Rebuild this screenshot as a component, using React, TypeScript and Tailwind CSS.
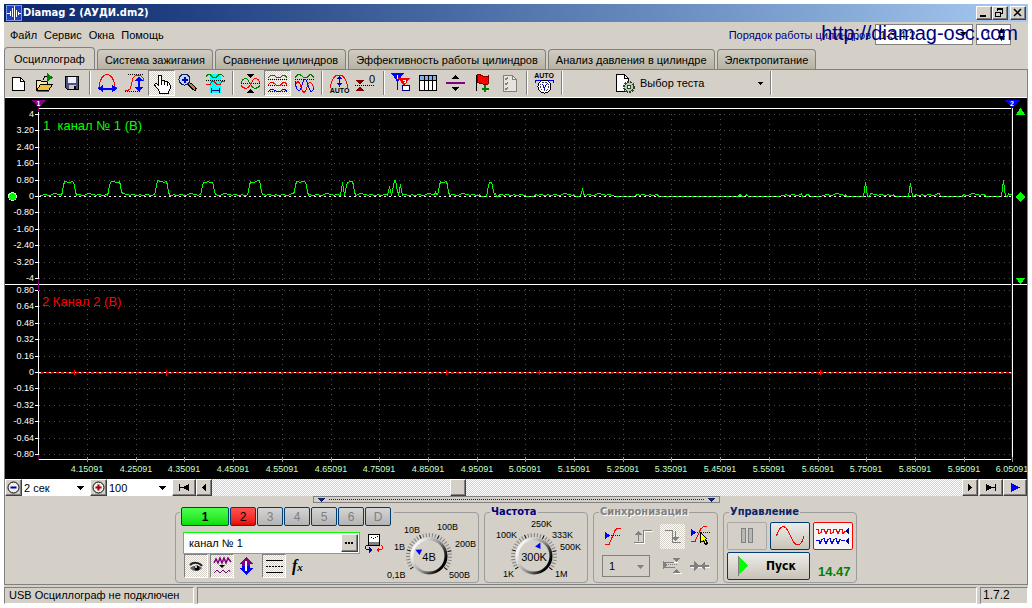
import { useState } from "react";
import type { ReactNode } from "react";
import clsx from "clsx";

const TABS = [
  "Осциллограф",
  "Система зажигания",
  "Сравнение цилиндров",
  "Эффективность работы цилиндров",
  "Анализ давления в цилиндре",
  "Электропитание",
];

const MENU = ["Файл", "Сервис", "Окна", "Помощь"];

const BOLD = "font-['DejaVu_Sans_Condensed','DejaVu_Sans',sans-serif] font-bold text-[11px]";
const CHECKER =
  "bg-[conic-gradient(#fff_25%,#d4d0c8_0_50%,#fff_0_75%,#d4d0c8_0)] bg-[length:2px_2px]";
const RAISED =
  "bg-[#d4d0c8] border border-t-white border-l-white border-r-[#404040] border-b-[#404040] shadow-[inset_-1px_-1px_0_#808080]";
const PRESSED = "border border-t-[#808080] border-l-[#808080] border-r-white border-b-white";

// ---------- icons ----------

function Icon({ children, size = 25 }: { children: ReactNode; size?: number }) {
  return (
    <svg width={size} height={size} viewBox={`0 0 ${size} ${size}`} fill="none" shapeRendering="crispEdges" aria-hidden="true">
      {children}
    </svg>
  );
}

const NewIcon = () => (
  <Icon>
    <path d="M6.500 6.500h8l4 4v9h-12z" fill="#fff" stroke="#000" />
    <path d="M14.500 6.500v4h4" stroke="#000" />
  </Icon>
);

const OpenIcon = () => (
  <Icon>
    <path d="M3.500 18.500v-9h4l1 1h6v3" fill="#ffe9a0" stroke="#000" />
    <path d="M3.500 19.500l4-6h12l-4 6z" fill="#f0c040" stroke="#000" />
    <path d="M4 20.500h12" stroke="#806000" />
    <path d="M10.500 9c0-3 2-4 4-4" stroke="#000" />
    <path d="M14 2l6 4.500-6 4.500z" fill="#008000" />
  </Icon>
);

const SaveIcon = () => (
  <Icon>
    <path d="M5.500 5.500h13v13h-11l-2-2z" fill="#505078" stroke="#000" />
    <path d="M8 6h8v6H8z" fill="#eef" />
    <path d="M9 14h7v4H9z" fill="#c8c8d0" />
    <path d="M14 15h2v3h-2z" fill="#000" />
  </Icon>
);

const WidthIcon = () => (
  <Icon>
    <path d="M3 16.500h1c1-8 4-13 8-13s7 5 8 13h2" stroke="#f00" />
    <path d="M5 17.500h15" stroke="#00f" strokeWidth="2" />
    <path d="M3 17.500l5-4v8zM22 17.500l-5-4v8z" fill="#00f" />
  </Icon>
);

const HeightIcon = () => (
  <Icon>
    <path d="M6 3.500h16M3 20.500h16" stroke="#000" strokeDasharray="1 1" />
    <path d="M3 20c5 0 6-3 7-9s3-7 6-7 5 2 6 6" stroke="#f00" />
    <path d="M17 9v8" stroke="#00f" strokeWidth="2" />
    <path d="M17 5l-4 5h8zM17 21l-4-5h8z" fill="#00f" />
  </Icon>
);

const HandIcon = () => (
  <Icon>
    <path
      d="M9.500 14.500V5.500c0-2 3-2 3 0v5c0-2 3-2 3 0v1c0-2 3-1.500 3 .5v1c0-1.500 2.500-1.500 2.500.5v4c0 3-2 3-2 5h-8c0-3-2-4-5-8-1-2 1-3 3.500 0z"
      fill="#fff"
      stroke="#000"
    />
    <path d="M12.500 10v4M15.500 11v3M18.500 12v3" stroke="#000" />
  </Icon>
);

const ZoomIcon = () => (
  <Icon>
    <path d="M12 12l8 7" stroke="#000" strokeWidth="4" />
    <path d="M13 12.500l6 5.500" stroke="#c08040" strokeWidth="2" />
    <circle cx="8.500" cy="8.500" r="5.500" fill="#b8d8ff" stroke="#202050" />
    <path d="M8.500 5.500v6M5.500 8.500h6" stroke="#0000c0" strokeWidth="2" />
  </Icon>
);

const RangeIcon = () => (
  <Icon>
    <path d="M7 3h11v19H7z" fill="#0ff" />
    <path d="M3 9.500h20" stroke="#000" strokeDasharray="1 1" />
    <path d="M3 5.500l2-2h2l3 3h3l3-3h2l3 2" stroke="#008000" />
    <path d="M3 13.500h4l2-3h2l3 3h3l2-3h3" stroke="#f00" />
    <path d="M8.500 17v5M16.500 17v5M8 19.500h9" stroke="#000080" />
  </Icon>
);

const BalanceIcon = () => (
  <Icon>
    <path d="M3 12.500h19" stroke="#000" strokeDasharray="1 1" />
    <path d="M3 11.500c3-6 6-5 9 1s7 6 10 2" stroke="#008000" />
    <path d="M3 14.500c3 4 7 4 10-2s6-7 9-1" stroke="#f00" />
    <path d="M9 3h7l-3.500 4zM9 22h7l-3.500-4z" fill="#000" />
  </Icon>
);

const ThreeWavesIcon = () => (
  <Icon>
    <path d="M3 8.500h19M3 14.500h19M3 20.500h19" stroke="#000" strokeDasharray="1 1" />
    <path d="M3 6.500l3-2h3l3 2h3l3-2h2l2 2" stroke="#008000" />
    <path d="M3 13.500l3-2h2l4 3h3l3-3h2l2 2" stroke="#f00" />
    <path d="M3 20.500l3-2h2l4 2h3l3-2h2l2 2" stroke="#00f" />
  </Icon>
);

const OverlapIcon = () => (
  <Icon>
    <path d="M3 8.500h19" stroke="#000" strokeDasharray="1 1" />
    <path d="M3 6.500l3-3h2l4 3h3l3-3h1l3 3" stroke="#008000" />
    <path d="M3 16c2-7 4-7 6 0s4 7 6 0 4-6 7 1" stroke="#f00" />
    <path d="M3 10c2 12 5 12 7 4s4-8 6 0 4 8 6 3" stroke="#00f" />
  </Icon>
);

const AutoHeightIcon = () => (
  <Icon>
    <path d="M3 17c2-9 4-13 9-13s7 4 9 13" stroke="#f00" />
    <path d="M12.500 5v11" stroke="#000080" />
    <path d="M10 8l2.500-3L15 8zM10 12l2.500 3 2.500-3z" fill="#0000c0" />
    <text x="12.500" y="22" fontSize="7" fontWeight="700" textAnchor="middle" fill="#000">AUTO</text>
  </Icon>
);

const ZeroIcon = () => (
  <Icon>
    <path d="M1 14.500h19" stroke="#000" strokeDasharray="1 1" />
    <path d="M2 9h8l-4 5zM2 20h8l-4-5z" fill="#800000" />
    <text x="15" y="12" fontSize="11" fill="#000">0</text>
  </Icon>
);

const MarkersIcon = () => (
  <Icon>
    <path d="M2 2h13l-6.500 9z" fill="#00f" />
    <path d="M8.500 10v9" stroke="#00f" />
    <path d="M9 7h12l-6 8z" fill="#f00" />
    <path d="M13.500 15v5" stroke="#f00" />
    <path d="M8.500 4v4M14 9.500h2.500v1.500h-2" stroke="#fff" />
    <path d="M13.500 14.500h7v5h-7z" fill="#fff" stroke="#000080" />
  </Icon>
);

const TableIcon = () => (
  <Icon>
    <path d="M3.500 4.500h17v15h-17z" fill="#fff" stroke="#000" />
    <path d="M4 5h16v4H4z" fill="#80b0f0" />
    <path d="M4 9.500h16M8.500 5v14M12.500 5v14M16.500 5v14" stroke="#000" />
  </Icon>
);

const SplitIcon = () => (
  <Icon>
    <path d="M3 12h19" stroke="#800080" strokeWidth="2" />
    <path d="M9 8l3.500-4L16 8zM9 16l3.500 4 3.500-4z" fill="#000" />
  </Icon>
);

const FlagIcon = () => (
  <Icon>
    <path d="M6.500 4v16" stroke="#000" />
    <path d="M7 4c4-2 5 3 11 1v8c-5 2-7-2-11-1z" fill="#f00" stroke="#800000" />
    <path d="M15 14v7M11.500 17.500h7" stroke="#008000" strokeWidth="2" />
  </Icon>
);

const ChecklistIcon = () => (
  <Icon>
    <path d="M6.500 4.500h9l4 4v12h-13z" fill="#e6e3dc" stroke="#808080" />
    <path d="M15.500 4.500v4h4" stroke="#808080" />
    <path d="M8 7l1 2 2-3M8 12l1 2 2-3M8 17l1 2 2-3" stroke="#808080" />
  </Icon>
);

const AutoVoltIcon = () => (
  <Icon>
    <text x="12" y="7" fontSize="7" fontWeight="700" textAnchor="middle" fill="#000">AUTO</text>
    <path d="M3.500 12V9.500H9M21.500 12V9.500H16" stroke="#00f" />
    <circle cx="12.500" cy="15.500" r="6.500" fill="#fff" stroke="#000" />
    <circle cx="12.500" cy="15.500" r="4.500" stroke="#404040" strokeDasharray="2 1" />
    <path d="M10.500 13l2 4.500 2-4.500" stroke="#00f" />
  </Icon>
);

const TestIcon = () => (
  <Icon>
    <path d="M5.500 3.500h8l4 4v13h-12z" fill="#fff" stroke="#000" />
    <path d="M13.500 3.500v4h4" stroke="#000" />
    <circle cx="18" cy="16" r="5" fill="#b8ccb0" stroke="#304030" strokeWidth="2" strokeDasharray="2 1" />
    <circle cx="18" cy="16" r="2" fill="#fff" stroke="#304030" />
  </Icon>
);

type Tool = { label: string; icon: ReactNode; pressed?: boolean };

const TOOL_GROUPS: Tool[][] = [
  [
    { label: "Создать", icon: <NewIcon /> },
    { label: "Открыть", icon: <OpenIcon /> },
    { label: "Сохранить", icon: <SaveIcon /> },
  ],
  [
    { label: "Масштаб по ширине", icon: <WidthIcon /> },
    { label: "Масштаб по высоте", icon: <HeightIcon /> },
    { label: "Рука", icon: <HandIcon />, pressed: true },
    { label: "Лупа", icon: <ZoomIcon /> },
    { label: "Выделение", icon: <RangeIcon /> },
  ],
  [
    { label: "Совместить", icon: <BalanceIcon /> },
    { label: "Раздельно", icon: <ThreeWavesIcon />, pressed: true },
    { label: "Наложение", icon: <OverlapIcon /> },
  ],
  [
    { label: "Автомасштаб", icon: <AutoHeightIcon /> },
    { label: "Ноль", icon: <ZeroIcon /> },
  ],
  [
    { label: "Маркеры", icon: <MarkersIcon /> },
    { label: "Таблица", icon: <TableIcon /> },
    { label: "Разделитель", icon: <SplitIcon /> },
    { label: "Добавить флаг", icon: <FlagIcon /> },
    { label: "Список", icon: <ChecklistIcon /> },
  ],
  [{ label: "Авто", icon: <AutoVoltIcon /> }],
];

function Separator() {
  return (
    <div className="flex w-2 justify-center py-px">
      <div className="w-0.5 border-l border-l-[#808080] border-r border-r-white" />
    </div>
  );
}

// ---------- chart ----------

const AXIS_X = 33;
const RIGHT_X = 1007;
const CH1 = ["4", "3.20", "2.40", "1.60", "0.80", "0", "-0.80", "-1.60", "-2.40", "-3.20", "-4"];
const CH2 = ["0.80", "0.64", "0.48", "0.32", "0.16", "0", "-0.16", "-0.32", "-0.48", "-0.64", "-0.80"];
const TIMES = Array.from({ length: 20 }, (_, i) => (4.15091 + i * 0.1).toFixed(5));

const rowY = (top: number, i: number) => Math.round(top + i * 16.4);
const colX = (i: number) => Math.round(82 + i * 48.7);

const PULSES = [
  [57, 70], [103, 116], [150, 163], [196, 209], [243, 256], [289, 302], [340, 349], [387, 392], [433, 443], [482, 488],
];
// narrow spikes: x, height
const SPIKES = [
  [337, 14], [384, 10], [395, 12], [430, 4], [577, 7], [860, 14], [905, 13], [998, 16],
];
// stretches where the trace rests exactly on zero
const FLAT = [
  [475, 481], [491, 493], [521, 529], [569, 580], [609, 630], [653, 733], [736, 740], [743, 775], [797, 800], [804, 816], [841, 864], [889, 909], [935, 957], [980, 1002],
];

function tracePoints() {
  const noise = [1, 1, 2, 2, 1, 1, 2, 3, 3, 2, 2, 1, 2, 2, 1, 1, 2];
  const points: string[] = [];
  for (let x = AXIS_X + 1; x < RIGHT_X; x++) {
    const k = noise[Math.floor(x / 2) % noise.length];
    const pulse = PULSES.find(([a, b]) => x >= a && x <= b);
    const spike = SPIKES.find(([sx]) => Math.abs(sx - x) <= 2);
    let h = FLAT.some(([a, b]) => x >= a && x <= b) ? 0 : k;
    if (pulse) {
      const edge = Math.min(x - pulse[0], pulse[1] - x);
      h = edge === 0 ? 5 : edge === 1 ? 11 : 13 + k;
    } else if (spike) {
      const d = Math.abs(spike[0] - x);
      h = Math.max(h, d === 0 ? spike[1] : d === 1 ? Math.round(spike[1] / 2) : 0);
    }
    points.push(`${x + 0.5},${98.5 - h}`);
  }
  return points.join(" ");
}

function Chart() {
  return (
    <svg viewBox="0 0 1022 381" className="block h-auto w-full bg-black" shapeRendering="crispEdges" role="img" aria-label="Осциллограмма">
      {[16, 192].map((top) =>
        CH1.map((_, i) => (
          <path key={`${top}-${i}`} d={`M${AXIS_X + 1} ${rowY(top, i) + 0.5}H${RIGHT_X}`} stroke="#505050" strokeDasharray="1 4" />
        ))
      )}
      {TIMES.slice(0, -1).map((t, i) => (
        <path key={t} d={`M${colX(i) + 0.5} 16V361`} stroke="#505050" strokeDasharray="1 4" />
      ))}
      <path d="M33.500 10v351M33 10.500h974.500M0 186.500h1022M33 361.500h975M1007.500 4v358" stroke="#fff" />
      <path d="M33.500 6v8M33.500 181v12M33.500 357v5" stroke="#800080" />
      <path d="M1006.500 8v354" stroke="#00f" />

      {[{ top: 16, labels: CH1 }, { top: 192, labels: CH2 }].map(({ top, labels }) =>
        labels.map((label, i) => (
          <g key={`${top}${label}`}>
            <path d={`M30 ${rowY(top, i) + 0.5}h3`} stroke="#fff" />
            <text x="29" y={rowY(top, i) + 3} fontSize="9" textAnchor="end" fill="#fff">{label}</text>
          </g>
        ))
      )}
      {TIMES.map((t, i) => (
        <g key={t}>
          <path d={`M${colX(i) + 0.5} 359v5`} stroke="#909090" />
          <text x={colX(i)} y="374" fontSize="9" textAnchor="middle" fill="#c8ffc8">{t}</text>
        </g>
      ))}

      <polyline points={tracePoints()} fill="none" stroke="#0f0" />
      <path d="M34 98.500h973" stroke="#fff" strokeDasharray="2 3" />
      <path d="M34 274.500h973" stroke="#f00" />
      <path d="M34 275.500h973" stroke="#f00" strokeDasharray="4 7 2 9 3 5" />
      <path d="M34 274.500h973" stroke="#fff" strokeDasharray="2 3" />
      <path d="M69.500 272v5M161.500 272v6M441.500 272v5M534.500 272v5M815.500 272v5" stroke="#f00" />

      <text x="38" y="32" fontSize="13" fill="#0f0" xmlSpace="preserve">1  канал № 1 (В)</text>
      <text x="37" y="208" fontSize="13" fill="#f00">2 Канал 2 (В)</text>

      <path d="M26 2h15l-7 7z" fill="#800080" />
      <path d="M999 2h16l-8 8z" fill="#00f" />
      <text x="33.500" y="8" fontSize="7" fontWeight="700" textAnchor="middle" fill="#fff">1</text>
      <text x="1007" y="8" fontSize="7" fontWeight="700" textAnchor="middle" fill="#fff">2</text>
      <circle cx="7.500" cy="98.500" r="4" fill="#0f0" stroke="#c0ffc0" />
      <path d="M1015.500 10l5 7h-10zM1015.500 94l5 5-5 5-5-5zM1010.500 180h10l-5 6z" fill="#0f0" />
    </svg>
  );
}

// ---------- knobs ----------

type KnobLabel = { text: string; x: number; y: number };

function Knob({ name, value, width, height, cx, cy, pointer, labels }: {
  name: string;
  value: string;
  width: number;
  height: number;
  cx: number;
  cy: number;
  pointer: number;
  labels: KnobLabel[];
}) {
  const ticks = Array.from({ length: 31 }, (_, i) => -215 + i * 8.4);
  return (
    <label className="relative block">
      <svg width={width} height={height} viewBox={`0 0 ${width} ${height}`} fill="none">
        <defs>
          <linearGradient id={`rim-${name}`} x1="0" y1="0.2" x2="1" y2="0.8">
            <stop offset="0.1" stopColor="#f4f4f4" />
            <stop offset="0.55" stopColor="#909090" />
            <stop offset="0.9" stopColor="#000" />
          </linearGradient>
        </defs>
        {ticks.map((a, i) => (
          <path key={a} d="M19 0h4" stroke={i % 6 === 0 ? "#000" : "#808080"} transform={`translate(${cx} ${cy}) rotate(${a})`} />
        ))}
        <circle cx={cx} cy={cy} r="17" fill="#d4d0c8" stroke={`url(#rim-${name})`} strokeWidth="3" />
        <path d="M15 0l-6-3v6z" fill="#00f" transform={`translate(${cx} ${cy}) rotate(${pointer})`} />
        <text x={cx} y={cy + 5} fontSize="11" textAnchor="middle" fill="#000">{value}</text>
        {labels.map((l) => (
          <text key={l.text} x={l.x} y={l.y} fontSize="9" fill="#000">{l.text}</text>
        ))}
      </svg>
      <input type="range" aria-label={name} className="absolute inset-0 h-full w-full cursor-pointer opacity-0" />
    </label>
  );
}

// ---------- panels ----------

function Group({ title, titleClass, className, children }: { title: string; titleClass: string; className: string; children: ReactNode }) {
  return (
    <fieldset className={clsx("h-[77px] rounded border border-[#9c9c9c]", className)}>
      <legend className={clsx("ml-[5px] px-px leading-3", BOLD, titleClass)}>{title}</legend>
      {children}
    </fieldset>
  );
}

function ChannelPanel() {
  const [channel, setChannel] = useState("1");
  return (
    <div className="mt-1.5 flex h-[71px] w-[304px] rounded border border-[#9c9c9c]">
      <div className="w-[210px] shrink-0">
        <div className="-mt-1.5 ml-1 flex w-[214px] gap-px bg-[#d4d0c8] px-px">
          {["1", "2", "3", "4", "5", "6", "D"].map((c) => (
            <button
              key={c}
              type="button"
              onClick={() => setChannel(c)}
              className={clsx(
                "h-[19px] rounded-xs border border-[#003c74] text-xs leading-4",
                channel === c ? "w-12" : "w-[26px]",
                c === "1" && "bg-linear-to-b from-[#4cff4c] to-[#00e000] font-bold",
                c === "2" && "bg-linear-to-b from-[#ff5050] to-[#e80000]",
                c !== "1" && c !== "2" && "bg-linear-to-b from-[#d4d4d4] to-[#b4b4b4] text-[#808080]"
              )}
            >
              {c}
            </button>
          ))}
        </div>
        <div className="mt-1.5 ml-[7px] flex items-center gap-1">
          <div className="flex h-[22px] w-[177px] border border-[#00ff00] bg-white p-px">
            <input aria-label="Имя канала" defaultValue="канал № 1" className="min-w-0 flex-1 pl-1 outline-none" />
            <button type="button" aria-label="Выбрать" className={clsx("flex w-[17px] items-center justify-center", RAISED)}>
              <svg width="9" height="2" shapeRendering="crispEdges"><path d="M0 0h2v2H0zM3 0h2v2H3zM6 0h2v2H6z" /></svg>
            </button>
          </div>
          <button type="button" aria-label="Переназначить канал">
            <svg width="20" height="20" fill="none" shapeRendering="crispEdges">
              <path d="M4.500 1.500h11v11h-11z" fill="#fff" stroke="#000" />
              <path d="M5 9h10v3H5z" fill="#808080" />
              <path d="M7 4h1v1H7zM9 5h1v1H9zM11 4h1v1h-1zM13 3h1v1h-1z" fill="#000" />
              <path d="M3.500 12.500h-1l-1 1v2l1 1h3" stroke="#0000c0" />
              <path d="M5 14v6l3-3z" fill="#0000c0" />
              <path d="M16.500 12.500h1l1 1v2l-1 1h-3" stroke="#f00" />
              <path d="M15 14v6l-3-3z" fill="#f00" />
            </svg>
          </button>
        </div>
        <div className="ml-2 flex gap-0.5">
          <button type="button" aria-label="Видимость" className={clsx("h-6 w-6", PRESSED, CHECKER)}>
            <svg width="22" height="22" viewBox="0 0 22 22">
              <path d="M5 10c3-3 9-3 12 1" stroke="#202020" strokeWidth="2" fill="none" />
              <path d="M5 13c3-3 9-3 12 0-3 4-9 4-12 0z" fill="#606060" />
              <circle cx="12" cy="13" r="2.500" />
              <circle cx="11" cy="12" r="1" fill="#fff" />
            </svg>
          </button>
          <button type="button" aria-label="Фильтр" className={clsx("h-6 w-6", PRESSED, CHECKER)}>
            <svg width="22" height="22" viewBox="0 0 22 22" fill="none" stroke="#800080">
              <path d="M3 8l2-4 2 4 2-5 2 5 2-5 2 5 2-5 3 4" strokeWidth="1.500" />
              <path d="M3 18l3-3 3 3 3-3 3 3 3-3 1 2" />
              <path d="M8 10h6l-3 3z" fill="#000" stroke="none" />
            </svg>
          </button>
          <button type="button" aria-label="Инверсия" className="h-6 w-6">
            <svg width="24" height="24" viewBox="0 0 24 24" shapeRendering="crispEdges">
              <path d="M10 3l7 7h-3v2H6v-2H3z" fill="#800080" />
              <path d="M10 21l7-7h-3v-2H6v2H3z" fill="#00f" />
              <path d="M9 7h2v10H9z" fill="#fff" />
            </svg>
          </button>
          <button type="button" aria-label="Линии" className={clsx("h-6 w-6", PRESSED, CHECKER)}>
            <svg width="22" height="22" viewBox="0 0 22 22" shapeRendering="crispEdges" stroke="#000">
              <path d="M3 5.500h17M3 17.500h17" />
              <path d="M3 11.500h17" strokeDasharray="2 1" />
            </svg>
          </button>
          <button type="button" className="h-6 pl-1 font-['Liberation_Serif',serif] text-base leading-5 font-bold italic">
            f<span className="text-[11px]">x</span>
          </button>
        </div>
      </div>
      <Knob
        name="Напряжение"
        value="4В"
        width={92}
        height={69}
        cx={43}
        cy={43}
        pointer={205}
        labels={[
          { text: "0,1В", x: 1, y: 65 },
          { text: "1В", x: 8, y: 37 },
          { text: "10В", x: 18, y: 20 },
          { text: "100В", x: 51, y: 17 },
          { text: "200В", x: 69, y: 34 },
          { text: "500В", x: 63, y: 65 },
        ]}
      />
    </div>
  );
}

function SyncPanel() {
  return (
    <Group title="Синхронизация" titleClass="text-[#808080] [text-shadow:1px_1px_0_#fff]" className="w-[125px]">
      <div className="flex gap-1 pt-1.5 pl-2">
        <button type="button" aria-label="Уровень">
          <Icon>
            <path d="M3 11.500h16" stroke="#00f" strokeDasharray="1 1" />
            <path d="M3 20.500h4l6-14 2-2h4" stroke="#f00" />
            <path d="M3 8l5 3.500L3 15z" fill="#00f" />
          </Icon>
        </button>
        <button type="button" aria-label="Фронт" disabled>
          <Icon>
            <path d="M4 19.500h9v-12h9" stroke="#fff" />
            <path d="M3 18.500h9v-12h9M7.500 8v9" stroke="#808080" />
            <path d="M4 11l3.500-4 3.500 4z" fill="#808080" />
          </Icon>
        </button>
        <button type="button" aria-label="Спад" className={CHECKER} disabled>
          <Icon>
            <path d="M5 6.500h7v12h9M15.500 7v9" stroke="#808080" />
            <path d="M12 13l3.500 4 3.500-4z" fill="#808080" />
          </Icon>
        </button>
        <button type="button" aria-label="Указать уровень">
          <Icon>
            <path d="M2 8.500h19" stroke="#00f" strokeDasharray="1 1" />
            <path d="M2 17.500h4l6-13 3-2h3" stroke="#f00" />
            <path d="M2 5l5 3.500L2 12z" fill="#00f" />
            <path d="M11.500 8.500l6 6-1 1 2 4-2 1-2-4-3 2z" fill="#ff0" stroke="#000" />
          </Icon>
        </button>
      </div>
      <div className="flex items-center gap-2.5 pt-1 pl-2">
        <div className="relative">
          <select aria-label="Канал синхронизации" className="h-[22px] w-12 appearance-none border border-[#808080] bg-[#d4d0c8] pl-1.5">
            <option>1</option>
          </select>
          <svg width="7" height="4" className="pointer-events-none absolute top-2.5 right-1.5"><path d="M0 0h7L3.500 4z" fill="#808080" /></svg>
        </div>
        <div className="flex gap-0.5">
          <Icon>
            <path d="M5 9.500h10M5 14.500h10" stroke="#808080" />
            <path d="M4 11.500h14" stroke="#808080" strokeDasharray="1 1" />
            <path d="M3 8l4 4-4 4zM13 5h7l-3.500 4zM13 20h7l-3.500-4z" fill="#808080" />
            <path d="M14 20.500h8M14 9.500h4" stroke="#fff" />
          </Icon>
          <Icon>
            <path d="M4 14.500h19" stroke="#fff" />
            <path d="M3 13h19" stroke="#808080" strokeWidth="2" />
            <path d="M7 8l5 5-5 5zM18 8l-5 5 5 5z" fill="#808080" />
          </Icon>
        </div>
      </div>
    </Group>
  );
}

const XP_BUTTON = "rounded-xs border border-[#003c74] bg-linear-to-b from-[#ececea] to-[#c8c4b8]";

function ControlPanel() {
  return (
    <Group title="Управление" titleClass="text-[#0a246a]" className="w-[134px]">
      <div className="flex gap-[3px] px-[3px] pt-1">
        <button type="button" aria-label="Пауза" disabled className="flex h-7 w-10 items-center justify-center rounded-xs border border-[#a8a8a8]">
          <svg width="12" height="16" fill="#b8b8b8" stroke="#808080" shapeRendering="crispEdges">
            <path d="M.5.5h4v14h-4zM7.500.5h4v14h-4z" />
          </svg>
        </button>
        <button type="button" aria-label="Синус" className={clsx("flex h-7 w-10 items-center justify-center", XP_BUTTON)}>
          <svg width="28" height="20" fill="none" stroke="#f00" shapeRendering="crispEdges">
            <path d="M.5 10C4-2 9-2 13 7s6 12 9 12 5-5 6-9" />
          </svg>
        </button>
        <button type="button" aria-label="Запись" className="flex h-7 w-10 items-center justify-center rounded-xs border border-[#f00] bg-[#f4f4f4]">
          <svg width="34" height="20" fill="none" shapeRendering="crispEdges">
            <path d="M0 3.500h2l1 4 2-1 1-3h2l1 2 1 2 2-4h2l1 4 2-1 1-3h2l1 2 1 2 2-4h2l1 4 2-2h2" stroke="#f00" />
            <path d="M0 14.500h3l1 3 2-4 2-1 1 3 1 2 2-4 2-1 1 3 1 2 2-4 2-1 1 3 1 2 2-4 2 1h3" stroke="#00f" />
            <path d="M33 2v6l-4-3zM33 12v6l-4-3z" fill="#000080" />
          </svg>
        </button>
      </div>
      <div className="flex items-end gap-2 px-[3px] pt-0.5">
        <button
          type="button"
          className={clsx("flex h-7 w-[83px] items-center gap-[18px] pl-2.5 font-['DejaVu_Sans_Condensed','DejaVu_Sans',sans-serif] text-xs font-bold", XP_BUTTON)}
        >
          <svg width="10" height="20" shapeRendering="crispEdges">
            <path d="M0 0v20" stroke="#808080" strokeWidth="2" />
            <path d="M1 0l9 9.500L1 19z" fill="#0f0" />
          </svg>
          Пуск
        </button>
        <output className="text-[13px] leading-4 font-bold text-[#008000]">14.47</output>
      </div>
    </Group>
  );
}

// ---------- navigation row ----------

function NavButton({ label, className, children }: { label: string; className?: string; children: ReactNode }) {
  return (
    <button type="button" aria-label={label} className={clsx("flex shrink-0 items-center justify-center", RAISED, className)}>
      {children}
    </button>
  );
}

function NavSelect({ label, value, className }: { label: string; value: string; className: string }) {
  return (
    <div className={clsx("relative shrink-0 bg-white", className)}>
      <select aria-label={label} className="h-full w-full appearance-none bg-white pl-0.5 leading-4">
        <option>{value}</option>
      </select>
      <svg width="7" height="4" className="pointer-events-none absolute top-[7px] right-1.5" shapeRendering="crispEdges">
        <path d="M0 0h7L3.500 4z" />
      </svg>
    </div>
  );
}

function NavRow() {
  return (
    <div className="flex h-[17px]">
      <NavButton label="Уменьшить" className="w-[17px]">
        <svg width="13" height="13" fill="none"><circle cx="6.500" cy="6.500" r="5.500" stroke="#000" fill="#eee" /><path d="M3.500 6.500h6" stroke="#0000a0" strokeWidth="2" /></svg>
      </NavButton>
      <NavSelect label="Развёртка" value="2 сек" className="w-[68px]" />
      <NavButton label="Увеличить" className="w-[17px]">
        <svg width="13" height="13" fill="none"><circle cx="6.500" cy="6.500" r="5.500" stroke="#000" fill="#eee" /><path d="M3.500 6.500h6M6.500 3.500v6" stroke="#a00000" strokeWidth="2" /></svg>
      </NavButton>
      <NavSelect label="Масштаб" value="100" className="w-[65px]" />
      <NavButton label="В начало" className="w-6">
        <svg width="10" height="7" shapeRendering="crispEdges"><path d="M0 0h1v7H0zM10 0v7L4 4H1V3h3z" /></svg>
      </NavButton>
      <NavButton label="Назад" className="w-4">
        <svg width="4" height="7" shapeRendering="crispEdges"><path d="M4 0v7L0 3.500z" /></svg>
      </NavButton>
      <input
        type="range"
        aria-label="Позиция"
        min={0}
        max={1000}
        defaultValue={324}
        className={clsx(
          "h-[17px] min-w-0 flex-1 appearance-none",
          CHECKER,
          "[&::-webkit-slider-thumb]:h-[17px] [&::-webkit-slider-thumb]:w-4 [&::-webkit-slider-thumb]:appearance-none [&::-webkit-slider-thumb]:border [&::-webkit-slider-thumb]:border-t-white [&::-webkit-slider-thumb]:border-r-[#404040] [&::-webkit-slider-thumb]:border-b-[#404040] [&::-webkit-slider-thumb]:border-l-white [&::-webkit-slider-thumb]:bg-[#d4d0c8] [&::-webkit-slider-thumb]:shadow-[inset_-1px_-1px_0_#808080]"
        )}
      />
      <NavButton label="Вперёд" className="w-4">
        <svg width="4" height="7" shapeRendering="crispEdges"><path d="M0 0v7l4-3.500z" /></svg>
      </NavButton>
      <NavButton label="В конец" className="ml-px w-6">
        <svg width="10" height="7" shapeRendering="crispEdges"><path d="M9 0h1v7H9zM0 0v7l6-3h3V3H6z" /></svg>
      </NavButton>
      <NavButton label="Воспроизвести" className="w-6">
        <svg width="9" height="9" shapeRendering="crispEdges"><path d="M0 0v9l9-4.500z" fill="#00f" /></svg>
      </NavButton>
    </div>
  );
}

// ---------- window ----------

function TitleBar() {
  return (
    <header className="flex h-[18px] items-center bg-linear-to-r from-[#0a246a] to-[#a6caf0] pr-0.5 pl-0.5 text-white">
      <svg width="16" height="16" className="mr-px" fill="none" shapeRendering="crispEdges">
        <path d="M0 0h16v16H0z" fill="#2040c0" />
        <path d="M.5.5h15v15H.5z" stroke="#8098e0" />
        <path d="M1 8.500h3M4.500 6v5M6.500 3v9M8.500 1v14M10.500 5v7M12.500 7v3M13 8.500h2" stroke="#fff" />
      </svg>
      <h1 className={clsx("flex-1", BOLD)}>Diamag 2 (АУДИ.dm2)</h1>
      <button type="button" aria-label="Свернуть" className={clsx("h-3.5 w-4", RAISED)}>
        <svg width="14" height="12" shapeRendering="crispEdges"><path d="M3 8h6v2H3z" /></svg>
      </button>
      <button type="button" aria-label="Восстановить" className={clsx("h-3.5 w-4", RAISED)}>
        <svg width="14" height="12" fill="none" stroke="#000" shapeRendering="crispEdges"><path d="M4.500 4V1.500h5v5H8M4 2h6M2.500 5.500h5v4h-5zM2 5h6" /></svg>
      </button>
      <button type="button" aria-label="Закрыть" className={clsx("ml-0.5 h-3.5 w-4", RAISED)}>
        <svg width="14" height="12" fill="none" stroke="#000" strokeWidth="1.500"><path d="M3 2l7 7M10 2L3 9" /></svg>
      </button>
    </header>
  );
}

function MenuBar() {
  return (
    <div className="relative flex h-[25px] items-center pr-[17px] pl-1.5">
      <nav className="flex flex-1 gap-[7px]">
        {MENU.map((m) => (
          <button key={m} type="button">{m}</button>
        ))}
      </nav>
      <label htmlFor="order" className="mr-1 text-[#000080]">Порядок работы цилиндров</label>
      <div className="relative mr-[3px]">
        <select id="order" className="h-[21px] w-[98px] appearance-none border border-[#808080] bg-white pl-1">
          <option>1-3-4-2</option>
        </select>
        <svg width="7" height="4" className="pointer-events-none absolute top-2 right-1.5"><path d="M0 0h7L3.500 4z" /></svg>
      </div>
      <div className="relative">
        <input aria-label="Цилиндр" defaultValue="1" className="h-[21px] w-[35px] border border-[#808080] bg-white pl-2" />
        <svg width="7" height="13" className="pointer-events-none absolute top-1 right-1.5"><path d="M0 5l3.500-5L7 5zM0 8h7l-3.500 5z" /></svg>
      </div>
      <a href="http://diamag-osc.com" className="absolute top-px right-2.5 text-[20px] leading-5 text-[#000080]">
        http://diamag-osc.com
      </a>
    </div>
  );
}

export default function App() {
  const [tab, setTab] = useState(0);

  return (
    <div className="bg-white p-1 font-['Liberation_Sans',sans-serif] text-[11px] leading-4 text-black">
      <div className="bg-[#d4d0c8]">
        <TitleBar />
        <MenuBar />

        <div role="tablist" className="flex h-[22px] items-end gap-0.5">
          {TABS.map((t, i) => (
            <button
              key={t}
              type="button"
              role="tab"
              aria-selected={tab === i}
              onClick={() => setTab(i)}
              className={clsx(
                "shrink-0 rounded-t border border-b-0 border-[#808080] whitespace-nowrap",
                tab === i ? "h-[22px] px-[9px]" : "h-5 bg-linear-to-b from-[#d0ccc2] to-[#b8b2a2] px-[7px]"
              )}
            >
              {t}
            </button>
          ))}
        </div>

        <main className="border border-[#808080]">
          <div className="flex h-7 border-b border-white pb-px">
            {TOOL_GROUPS.map((group, g) => (
              <div key={g} className="flex">
                {group.map((tool) => (
                  <button
                    key={tool.label}
                    type="button"
                    aria-label={tool.label}
                    className={clsx("flex w-[27px] items-center justify-center", tool.pressed && [PRESSED, CHECKER])}
                  >
                    {tool.icon}
                  </button>
                ))}
                <Separator />
              </div>
            ))}
            <button type="button" className="flex w-[201px] items-center pl-[45px]">
              <TestIcon />
              <span className="ml-1 flex-1 text-left">Выбор теста</span>
              <svg width="5" height="3" className="mr-1" shapeRendering="crispEdges"><path d="M0 0h5L2.500 3z" /></svg>
            </button>
            <Separator />
          </div>

          <Chart />
          <NavRow />

          <div className="mx-auto flex h-[7px] w-[407px] items-center gap-1 border border-[#808080] px-1">
            <svg width="7" height="4" shapeRendering="crispEdges"><path d="M0 0h7L3.500 4z" fill="#0a246a" /></svg>
            <div className="flex-1 border-t border-dotted border-[#0a246a]" />
            <svg width="7" height="4" shapeRendering="crispEdges"><path d="M0 0h7L3.500 4z" fill="#0a246a" /></svg>
          </div>

          <section className="flex justify-center gap-[5px] pt-[3px] pb-px">
            <ChannelPanel />
            <Group title="Частота" titleClass="text-[#000080]" className="w-[104px]">
              <Knob
                name="Частота"
                value="300K"
                width={102}
                height={64}
                cx={49}
                cy={38}
                pointer={-65}
                labels={[
                  { text: "1K", x: 18, y: 59 },
                  { text: "100K", x: 11, y: 20 },
                  { text: "250K", x: 46, y: 9 },
                  { text: "333K", x: 67, y: 20 },
                  { text: "500K", x: 75, y: 32 },
                  { text: "1M", x: 70, y: 59 },
                ]}
              />
            </Group>
            <SyncPanel />
            <ControlPanel />
          </section>
        </main>

        <footer className="flex h-[19px] gap-[3px] pt-0.5 whitespace-nowrap">
          <div className={clsx("w-[190px] pl-1 leading-[15px]", PRESSED)}>USB Осциллограф не подключен</div>
          <div className={clsx("flex-1", PRESSED)} />
          <div className={clsx("w-12 pl-0.5 text-xs leading-[15px]", PRESSED)}>1.7.2</div>
        </footer>
      </div>
    </div>
  );
}
